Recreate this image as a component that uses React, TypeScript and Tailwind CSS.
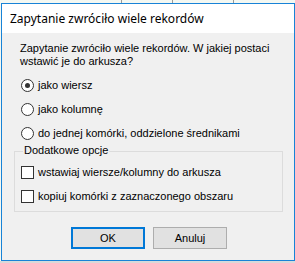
import React from "react";

function Radio({ checked, label }: { checked?: boolean; label: string }) {
  return (
    <div className="flex items-center h-[13px]">
      <div className="w-[13px] h-[13px] rounded-full border border-[#333333] bg-white flex items-center justify-center">
        {checked && <div className="w-[5px] h-[5px] rounded-full bg-[#333333]" />}
      </div>
      <span className="ml-[4px] leading-[13px]">{label}</span>
    </div>
  );
}

function Check({ label }: { label: string }) {
  return (
    <div className="flex items-center h-[13px]">
      <div className="w-[13px] h-[13px] border border-[#333333] bg-white" />
      <span className="ml-[4px] leading-[13px]">{label}</span>
    </div>
  );
}

export default function App() {
  return (
    <div className="w-[295px] h-[263px] bg-[#d9d9d9] overflow-hidden flex flex-col" style={{ fontFamily: "'Liberation Sans', Arial, sans-serif" }}>
      <div className="h-[3px] bg-[#f4f8f2] flex">
        <div className="w-[1px]" />
        <div className="w-[120px]" />
        <div className="w-[1px] bg-[#9a9a9a]" />
        <div className="w-[50px]" />
        <div className="w-[1px] bg-[#9a9a9a]" />
        <div className="w-[60px]" />
        <div className="w-[1px] bg-[#9a9a9a]" />
      </div>
      <div className="flex">
        <div className="w-[1px] bg-[#f4f8f2]" />
        <div className="w-[294px] h-[258px] border border-[#1883d7] bg-[#f0f0f0] flex flex-col text-[11px] text-black">
          <div className="h-[29px] bg-white flex items-center pl-[8px] text-[12px]" style={{ fontFamily: "'Noto Sans', 'Open Sans', sans-serif" }}>
            Zapytanie zwróciło wiele rekordów
          </div>
          <div className="flex flex-col pl-[18px] pt-[9px]">
            <div className="leading-[13px]">
              Zapytanie zwróciło wiele rekordów. W jakiej postaci
              <br />
              wstawić je do arkusza?
            </div>
            <div className="mt-[11px] ml-[1px] flex flex-col gap-[11px]">
              <Radio checked label="jako wiersz" />
              <Radio label="jako kolumnę" />
              <Radio label="do jednej komórki, oddzielone średnikami" />
            </div>
          </div>
          <div className="ml-[12px] mr-[11px] mt-[11px] relative border border-[#dcdcdc] h-[61px] pt-[14px] pl-[6px] flex flex-col gap-[11px]">
            <span className="absolute left-[8px] top-[-8px] px-[1px] bg-[#f0f0f0] leading-[13px]">Dodatkowe opcje</span>
            <Check label="wstawiaj wiersze/kolumny do arkusza" />
            <Check label="kopiuj komórki z zaznaczonego obszaru" />
          </div>
          <div className="flex mt-[15px] ml-[69px] gap-[8px]">
            <div className="w-[74px] h-[22px] border-2 border-[#0078d7] bg-[#e1e1e1] flex items-center justify-center">OK</div>
            <div className="w-[74px] h-[22px] border border-[#adadad] bg-[#e1e1e1] flex items-center justify-center">Anuluj</div>
          </div>
        </div>
      </div>
    </div>
  );
}
